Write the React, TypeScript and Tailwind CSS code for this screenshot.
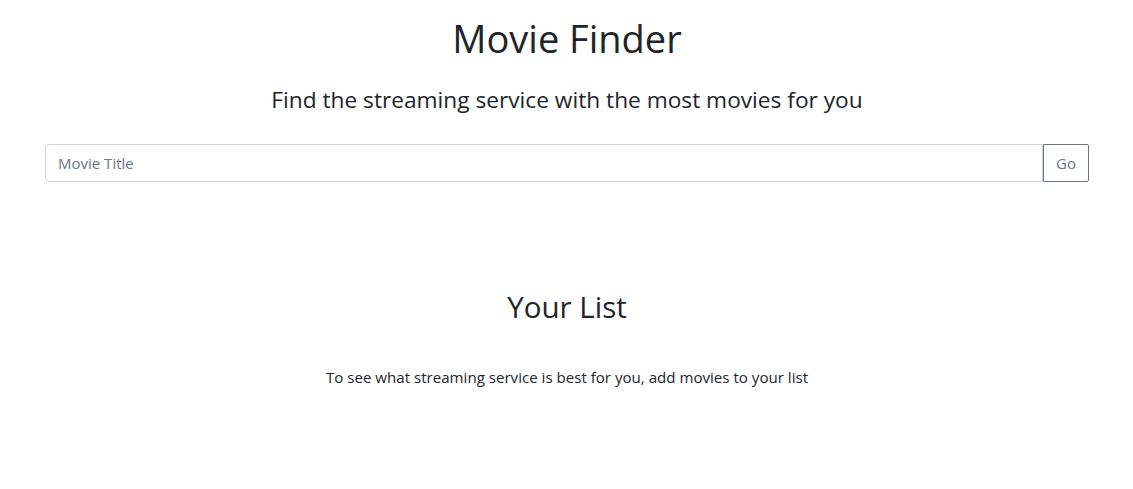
import React, { useState } from "react";

export default function App() {
  const [title, setTitle] = useState("");

  return (
    <div className="min-h-screen bg-white text-[#212529] font-['Open_Sans','Noto_Sans',sans-serif]">
      <div className="pl-[45px] pr-[44px] flex flex-col items-center">
        <h1 className="mt-[14px] text-[38px] leading-[48px] font-normal">Movie Finder</h1>
        <h4 className="mt-[23px] text-[22.7px] leading-[29px] font-normal">Find the streaming service with the most movies for you</h4>
        <div className="mt-[30px] w-full flex">
          <input
            type="text"
            value={title}
            onChange={(e) => setTitle(e.target.value)}
            placeholder="Movie Title"
            className="flex-1 min-w-0 h-[38px] px-3 rounded-l-[4px] border border-[#ced4da] outline-none text-[15px] text-[#495057] placeholder:text-[#6c757d]"
          />
          <button className="w-[46px] h-[38px] rounded-r-[2px] border border-[#6c757d] text-[15px] text-[#6c757d]">Go</button>
        </div>
        <h2 className="mt-[106px] text-[29.5px] leading-[38px] font-normal">Your List</h2>
        <p className="mt-[39px] text-[15.1px] leading-[24px]">To see what streaming service is best for you, add movies to your list</p>
      </div>
    </div>
  );
}
